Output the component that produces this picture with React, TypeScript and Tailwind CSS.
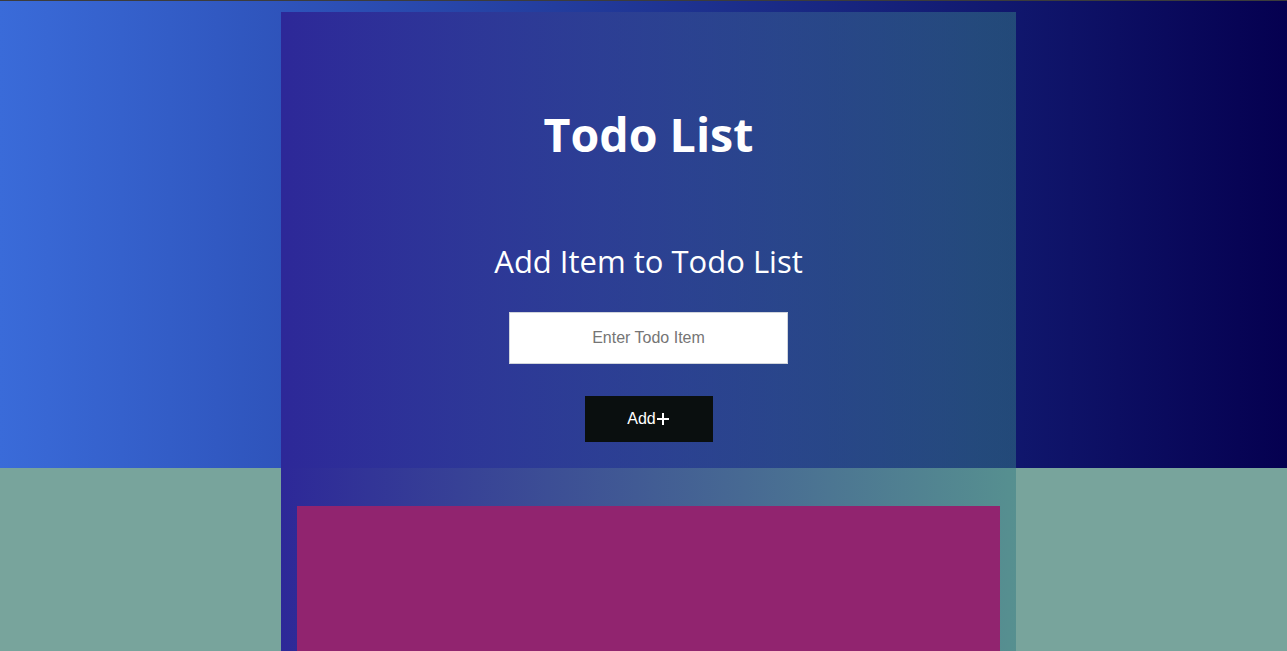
import React from 'react';

const App = () => {
  return (
    <div className="min-h-screen overflow-hidden border-t border-[#3c3c3c] bg-[#78a49c] bg-[linear-gradient(to_right,#3a6bd9,#050050)] bg-no-repeat bg-[length:100%_467px] flex justify-center pl-[10px]">
      {/* Main panel */}
      <div className="mt-[11px] w-[735px] bg-[linear-gradient(to_right,rgba(45,40,152,1),rgba(53,124,132,0.5))] pt-[95px] pb-4 px-4 flex flex-col items-center">
        <h1 className="text-[46.5px] leading-[1.2] font-bold text-white font-['Open_Sans',sans-serif]">
          Todo List
        </h1>
        <h2 className="mt-[80px] text-[31px] leading-[1.2] text-white font-['Open_Sans',sans-serif]">
          Add Item to Todo List
        </h2>
        <input
          type="text"
          placeholder="Enter Todo Item"
          className="mt-8 w-[279px] h-[52px] bg-white border border-gray-300 text-center text-base text-gray-800 placeholder:text-[#757575] font-['Liberation_Sans',sans-serif] outline-none"
        />
        <button className="mt-8 w-[128px] h-[46px] bg-[#0a0f0f] text-white text-base font-['Liberation_Sans',sans-serif] inline-flex items-center justify-center">
          Add
          <svg className="w-[14px] h-[14px]" viewBox="0 0 14 14" fill="none" stroke="currentColor" strokeWidth="2">
            <path d="M7 1v12M1 7h12" />
          </svg>
        </button>

        {/* Items area */}
        <div className="mt-16 w-full h-[320px] bg-[#91246f]"></div>
      </div>
    </div>
  );
};

export default App;
